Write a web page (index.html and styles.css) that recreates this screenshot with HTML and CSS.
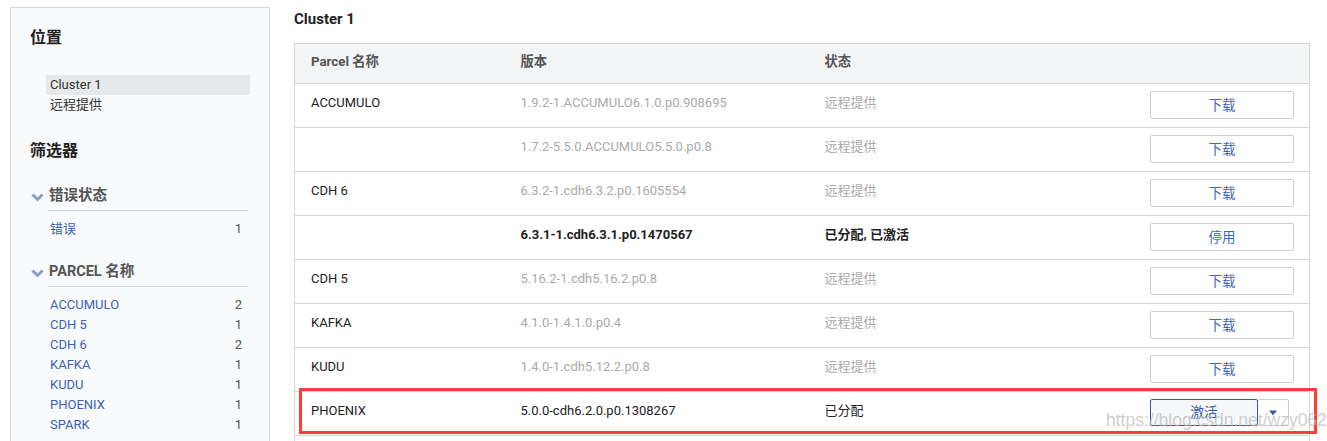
FILE: index.html
```html
<!DOCTYPE html>
<html lang="zh-CN">
  <head>
    <meta charset="UTF-8" />
    <title>Parcel</title>
    <link rel="stylesheet" href="styles.css">
  </head>
  <body>
    <div class="sidebar">
      <h2>位置</h2>
      <ul class="loc-list">
        <li class="selected">Cluster 1</li>
        <li>远程提供</li>
      </ul>

      <h2 class="filter-title">筛选器</h2>

      <!-- 错误状态 -->
      <div class="group-title">
        <svg class="chevron" width="13" height="10" viewBox="0 0 13 10">
          <path d="M1.5 2.5 L6.5 7.5 L11.5 2.5" fill="none" stroke="#8c9dc4" stroke-width="3" />
        </svg>
        <span class="group-label">错误状态</span>
      </div>
      <ul class="filter-list">
        <li><span>错误</span><span class="count">1</span></li>
      </ul>

      <!-- PARCEL 名称 -->
      <div class="group-title">
        <svg class="chevron" width="13" height="10" viewBox="0 0 13 10">
          <path d="M1.5 2.5 L6.5 7.5 L11.5 2.5" fill="none" stroke="#8c9dc4" stroke-width="3" />
        </svg>
        <span class="group-label">PARCEL 名称</span>
      </div>
      <ul class="filter-list">
        <li><span>ACCUMULO</span><span class="count">2</span></li>
        <li><span>CDH 5</span><span class="count">1</span></li>
        <li><span>CDH 6</span><span class="count">2</span></li>
        <li><span>KAFKA</span><span class="count">1</span></li>
        <li><span>KUDU</span><span class="count">1</span></li>
        <li><span>PHOENIX</span><span class="count">1</span></li>
        <li><span>SPARK</span><span class="count">1</span></li>
      </ul>
    </div>

    <div class="main">
      <h3>Cluster 1</h3>
      <table class="parcels">
        <thead>
          <tr>
            <th class="col-name">Parcel 名称</th>
            <th class="col-ver">版本</th>
            <th class="col-status">状态</th>
            <th></th>
          </tr>
        </thead>
        <tbody>
          <tr>
            <td>ACCUMULO</td>
            <td class="muted">1.9.2-1.ACCUMULO6.1.0.p0.908695</td>
            <td class="muted">远程提供</td>
            <td class="action"><button class="btn">下载</button></td>
          </tr>
          <tr>
            <td></td>
            <td class="muted">1.7.2-5.5.0.ACCUMULO5.5.0.p0.8</td>
            <td class="muted">远程提供</td>
            <td class="action"><button class="btn">下载</button></td>
          </tr>
          <tr>
            <td>CDH 6</td>
            <td class="muted">6.3.2-1.cdh6.3.2.p0.1605554</td>
            <td class="muted">远程提供</td>
            <td class="action"><button class="btn">下载</button></td>
          </tr>
          <tr>
            <td></td>
            <td class="strong">6.3.1-1.cdh6.3.1.p0.1470567</td>
            <td class="strong">已分配, 已激活</td>
            <td class="action"><button class="btn">停用</button></td>
          </tr>
          <tr>
            <td>CDH 5</td>
            <td class="muted">5.16.2-1.cdh5.16.2.p0.8</td>
            <td class="muted">远程提供</td>
            <td class="action"><button class="btn">下载</button></td>
          </tr>
          <tr>
            <td>KAFKA</td>
            <td class="muted">4.1.0-1.4.1.0.p0.4</td>
            <td class="muted">远程提供</td>
            <td class="action"><button class="btn">下载</button></td>
          </tr>
          <tr>
            <td>KUDU</td>
            <td class="muted">1.4.0-1.cdh5.12.2.p0.8</td>
            <td class="muted">远程提供</td>
            <td class="action"><button class="btn">下载</button></td>
          </tr>
          <tr>
            <td>PHOENIX</td>
            <td>5.0.0-cdh6.2.0.p0.1308267</td>
            <td>已分配</td>
            <td class="action">
              <div class="split">
                <button class="btn btn-primary">激活</button>
                <button class="btn btn-caret">
                  <svg width="10" height="6" viewBox="0 0 10 6"><path d="M1 0.5 L9 0.5 L5 5.5 Z" fill="#3b5aa6" /></svg>
                </button>
              </div>
            </td>
          </tr>
          <tr>
            <td></td>
            <td></td>
            <td></td>
            <td class="action"></td>
          </tr>
        </tbody>
      </table>

      <!-- 标注框 -->
      <div class="highlight"></div>
      <div class="watermark">https://blog.csdn.net/wzy0623</div>
    </div>
  </body>
</html>
```

FILE: styles.css
```css
body {
  margin: 0;
  font-family: Roboto, "Noto Sans CJK SC", sans-serif;
  font-size: 13px;
  color: #222;
  background: #fff;
  display: flex;
  align-items: flex-start;
  height: 441px;
  overflow: hidden;
}

/* 左侧栏 */
.sidebar {
  margin: 7px 0 0 10px;
  width: 260px;
  height: 470px;
  box-sizing: border-box;
  padding: 19px 19px 0;
  background: #f9fafc;
  border: 1px solid #d6d8dc;
  flex-shrink: 0;
}

.sidebar h2 {
  margin: 0;
  font-size: 16px;
  line-height: 22px;
  font-weight: bold;
  color: #222;
}

.sidebar ul {
  list-style: none;
  margin: 0;
  padding: 0;
}

.loc-list {
  margin: 26px 0 0 16px !important;
}

.loc-list li {
  line-height: 20px;
  padding: 0 4px;
  color: #333;
}

.loc-list li.selected {
  background: #e7e8ea;
}

.sidebar .filter-title {
  margin-top: 25px;
}

.group-title {
  display: flex;
  align-items: flex-end;
  margin-top: 24px;
}

.filter-list + .group-title {
  margin-top: 23px;
}

.chevron {
  width: 13px;
  margin: 0 4px 9px 1px;
  flex-shrink: 0;
}

.group-label {
  flex: 1;
  margin-right: 2px;
  padding: 0 0 4px 1px;
  font-size: 14.5px;
  line-height: 20px;
  font-weight: bold;
  color: #555;
  border-bottom: 1px solid #d0d3d8;
}

.filter-list {
  margin: 8px 0 0 16px !important;
}

.filter-list li {
  display: flex;
  justify-content: space-between;
  line-height: 20px;
  padding: 0 8px 0 4px;
  color: #3b62b5;
}

.filter-list .count {
  color: #555;
}

/* 主区域 */
.main {
  position: relative;
  margin-left: 24px;
  width: 1016px;
  flex-shrink: 0;
}

.main h3 {
  margin: 9px 0 14px;
  font-size: 15px;
  line-height: 20px;
  font-weight: bold;
  color: #222;
}

.parcels {
  width: 100%;
  border-collapse: collapse;
  border: 1px solid #d6d6d6;
}

.parcels th,
.parcels td {
  text-align: left;
  padding: 0 16px;
  border-bottom: 1px solid #d6d6d6;
  box-sizing: border-box;
}

.parcels th {
  height: 40px;
  padding-top: 9px;
  line-height: 18px;
  background: #f3f4f6;
  color: #555;
  font-size: 13.3px;
  font-weight: bold;
  vertical-align: top;
}

.parcels td {
  height: 44px;
  vertical-align: top;
  padding-top: 10px;
  padding-bottom: 0;
  line-height: 18px;
}

.col-name {
  width: 210px;
}

.col-ver {
  width: 304px;
}

.col-status {
  width: 200px;
}

.parcels td.muted {
  color: #aaa;
}

.parcels td.strong {
  font-weight: bold;
}

.parcels td.action {
  vertical-align: top;
  padding-top: 7px;
  padding-right: 15px;
}

.btn {
  display: block;
  margin-left: auto;
  width: 144px;
  height: 28px;
  padding: 0 0 3px;
  background: #fff;
  border: 1px solid #cfcfcf;
  border-radius: 2px;
  color: #3a66c4;
  font-family: inherit;
  font-size: 13.5px;
  cursor: pointer;
}

.split {
  display: flex;
  justify-content: flex-end;
  margin: 0 5px 0 0;
}

.btn-primary {
  width: 108px;
  height: 27px;
  background: #f6f8fb;
  border-color: #3b55a0;
  color: #3b5aa6;
}

.btn-caret {
  width: 31px;
  height: 27px;
  padding: 0;
  margin-left: 0;
  border-left: none;
  display: flex;
  align-items: center;
  justify-content: center;
}

/* 红色标注 */
.highlight {
  position: absolute;
  left: 5px;
  top: 388px;
  width: 1018px;
  height: 46px;
  box-sizing: border-box;
  border: 3px solid #ff3b3b;
}

.watermark {
  position: absolute;
  left: 812px;
  top: 410px;
  font-family: "Liberation Sans", sans-serif;
  font-size: 17.5px;
  color: rgba(190, 190, 190, 0.75);
  white-space: nowrap;
}
```
